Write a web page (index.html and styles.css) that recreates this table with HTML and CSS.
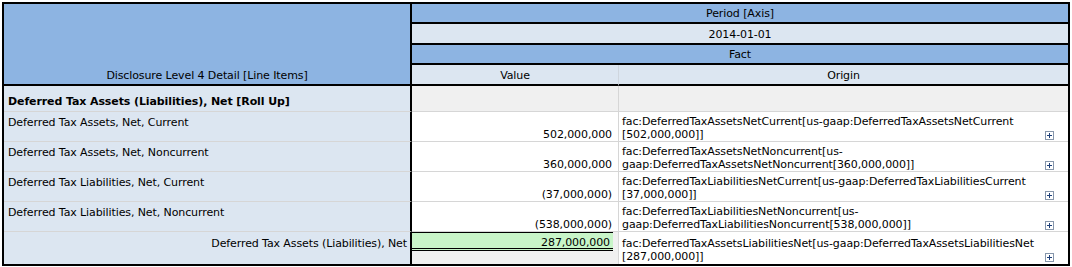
FILE: index.html
```html
<!DOCTYPE html>
<html>
<head>
<meta charset="utf-8">
<link rel="stylesheet" href="styles.css">
</head>
<body>
<table class="grid">
  <colgroup>
    <col class="c-label">
    <col class="c-value">
    <col class="c-origin">
  </colgroup>
  <thead>
    <tr class="h1">
      <th class="corner" rowspan="4">Disclosure Level 4 Detail [Line Items]</th>
      <th class="hdr dark" colspan="2">Period [Axis]</th>
    </tr>
    <tr class="h2"><th class="hdr light" colspan="2">2014-01-01</th></tr>
    <tr class="h3"><th class="hdr dark" colspan="2">Fact</th></tr>
    <tr class="h4">
      <th class="hdr light sep">Value</th>
      <th class="hdr light">Origin</th>
    </tr>
  </thead>
  <tbody>
    <tr class="rollup">
      <td class="label">Deferred Tax Assets (Liabilities), Net [Roll Up]</td>
      <td class="value blank"></td>
      <td class="origin blank"></td>
    </tr>
    <tr class="fact">
      <td class="label">Deferred Tax Assets, Net, Current</td>
      <td class="value">502,000,000</td>
      <td class="origin"><div class="orig"><div class="otext">fac:DeferredTaxAssetsNetCurrent[us-gaap:DeferredTaxAssetsNetCurrent<br>[502,000,000]]</div><svg class="plus" width="9" height="9" viewBox="0 0 9 9"><rect x="0.5" y="0.5" width="8" height="8" fill="#fff" stroke="#8696ab"/><path d="M2 4.5h5M4.5 2v5" stroke="#1d3f7a"/></svg></div></td>
    </tr>
    <tr class="fact">
      <td class="label">Deferred Tax Assets, Net, Noncurrent</td>
      <td class="value">360,000,000</td>
      <td class="origin"><div class="orig"><div class="otext">fac:DeferredTaxAssetsNetNoncurrent[us-<br>gaap:DeferredTaxAssetsNetNoncurrent[360,000,000]]</div><svg class="plus" width="9" height="9" viewBox="0 0 9 9"><rect x="0.5" y="0.5" width="8" height="8" fill="#fff" stroke="#8696ab"/><path d="M2 4.5h5M4.5 2v5" stroke="#1d3f7a"/></svg></div></td>
    </tr>
    <tr class="fact">
      <td class="label">Deferred Tax Liabilities, Net, Current</td>
      <td class="value">(37,000,000)</td>
      <td class="origin"><div class="orig"><div class="otext">fac:DeferredTaxLiabilitiesNetCurrent[us-gaap:DeferredTaxLiabilitiesCurrent<br>[37,000,000]]</div><svg class="plus" width="9" height="9" viewBox="0 0 9 9"><rect x="0.5" y="0.5" width="8" height="8" fill="#fff" stroke="#8696ab"/><path d="M2 4.5h5M4.5 2v5" stroke="#1d3f7a"/></svg></div></td>
    </tr>
    <tr class="fact">
      <td class="label">Deferred Tax Liabilities, Net, Noncurrent</td>
      <td class="value">(538,000,000)</td>
      <td class="origin"><div class="orig"><div class="otext">fac:DeferredTaxLiabilitiesNetNoncurrent[us-<br>gaap:DeferredTaxLiabilitiesNoncurrent[538,000,000]]</div><svg class="plus" width="9" height="9" viewBox="0 0 9 9"><rect x="0.5" y="0.5" width="8" height="8" fill="#fff" stroke="#8696ab"/><path d="M2 4.5h5M4.5 2v5" stroke="#1d3f7a"/></svg></div></td>
    </tr>
    <tr class="total">
      <td class="label">Deferred Tax Assets (Liabilities), Net</td>
      <td class="value"><div class="sum">287,000,000</div></td>
      <td class="origin"><div class="orig"><div class="otext">fac:DeferredTaxAssetsLiabilitiesNet[us-gaap:DeferredTaxAssetsLiabilitiesNet<br>[287,000,000]]</div><svg class="plus" width="9" height="9" viewBox="0 0 9 9"><rect x="0.5" y="0.5" width="8" height="8" fill="#fff" stroke="#8696ab"/><path d="M2 4.5h5M4.5 2v5" stroke="#1d3f7a"/></svg></div></td>
    </tr>
  </tbody>
</table>
</body>
</html>
```

FILE: styles.css
```css
body {
  margin: 0;
  background: #fff;
  font-family: "DejaVu Sans", sans-serif;
  font-size: 11px;
  letter-spacing: -0.1px;
  color: #000;
}

.grid {
  margin: 2px;
  width: 1068px;
  border: 2px solid #000;
  border-collapse: separate;
  border-spacing: 0;
  table-layout: fixed;
}

.c-label { width: 408px; }
.c-value { width: 207px; }
.c-origin { width: 449px; }

th, td {
  padding: 0;
  font-weight: normal;
}

/* header */
.corner {
  background: #8db4e2;
  border-right: 2px solid #000;
  border-bottom: 2px solid #000;
  vertical-align: bottom;
  text-align: center;
  line-height: 17px;
  padding-top: 2px;
}

.hdr {
  text-align: center;
  border-bottom: 2px solid #000;
  padding-top: 2px;
}

.dark { background: #8db4e2; }
.light { background: #dce6f1; }

.h1 .hdr { line-height: 16px; }
.h2 .hdr { line-height: 17px; }
.h3 .hdr { line-height: 16px; }
.h4 .hdr { line-height: 17px; }
.h4 .sep { border-right: 1px solid #cfd6de; }

/* body */
tbody td {
  line-height: 13px;
  border-bottom: 1px solid #d6d6d6;
}

tbody tr:last-child td { border-bottom: none; }

.label {
  background: #dce6f1;
  border-right: 2px solid #000;
  padding: 4px 3px 0 4px;
  vertical-align: top;
  white-space: nowrap;
}

.value {
  background: #fff;
  border-right: 1px solid #d6d6d6;
  text-align: right;
  vertical-align: bottom;
  padding: 3px 6px 0 2px;
  white-space: nowrap;
}

.origin {
  background: #fff;
  padding: 3px 0 0 3px;
  vertical-align: top;
}

.blank { background: #f0f0f0; }

.rollup .label {
  font-weight: bold;
  padding-top: 9px;
  padding-bottom: 3px;
}

.orig {
  display: flex;
  align-items: flex-end;
}

.otext {
  flex: 1;
  white-space: nowrap;
}

.plus {
  flex: none;
  display: block;
  margin: 0 14px 1px 0;
}

/* total row */
.total .label {
  text-align: right;
  padding-top: 5px;
}

.total .value {
  background: #f0f0f0;
  vertical-align: top;
  padding: 0;
}

.sum {
  background: #c8f5c8;
  border-top: 1px solid #000;
  border-bottom: 3px double #000;
  margin-right: 5px;
  padding: 4px 3px 0 0;
  line-height: 11px;
}

.total .origin {
  padding-top: 5px;
  padding-bottom: 1px;
}
```
